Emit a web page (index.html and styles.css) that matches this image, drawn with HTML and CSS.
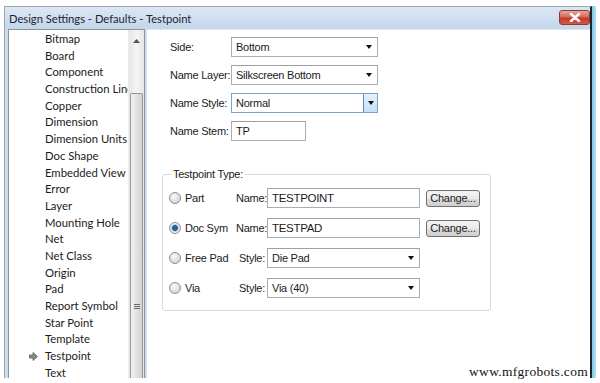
FILE: index.html
```html
<!DOCTYPE html>
<html>
<head>
<meta charset="utf-8">
<link rel="stylesheet" href="styles.css">
</head>
<body>
<div class="screen">
  <div class="frame">
    <div class="window">
      <div class="titlebar">
        <span class="title">Design Settings - Defaults - Testpoint</span>
        <div class="close">
          <svg width="12" height="9" viewBox="0 0 12 9"><path d="M2 1 L10 8 M10 1 L2 8" stroke="#fff" stroke-width="2.4" stroke-linecap="round"/></svg>
        </div>
      </div>
      <div class="body">
        <div class="listbox">
          <ul class="items">
            <li>Bitmap</li>
            <li>Board</li>
            <li>Component</li>
            <li>Construction Line</li>
            <li>Copper</li>
            <li>Dimension</li>
            <li>Dimension Units</li>
            <li>Doc Shape</li>
            <li>Embedded View</li>
            <li>Error</li>
            <li>Layer</li>
            <li>Mounting Hole</li>
            <li>Net</li>
            <li>Net Class</li>
            <li>Origin</li>
            <li>Pad</li>
            <li>Report Symbol</li>
            <li>Star Point</li>
            <li>Template</li>
            <li class="current"><svg class="marker" width="9" height="9" viewBox="0 0 9 9"><path d="M0.5 3 H4 V0.5 L8.5 4.5 L4 8.5 V6 H0.5 Z" fill="#8a8a8a" stroke="#5a5a5a" stroke-width="0.8"/></svg>Testpoint</li>
            <li>Text</li>
          </ul>
          <div class="scrollbar">
            <div class="arrow-up"><svg width="7" height="4" viewBox="0 0 7 4"><path d="M0 4 L3.5 0 L7 4 Z" fill="#555"/></svg></div>
            <div class="track"></div>
            <div class="thumb"><div class="grip"><span></span><span></span><span></span></div></div>
          </div>
        </div>
        <div class="panel">
          <div class="form">
            <div class="row"><span class="lbl">Side:</span><div class="combo w147"><span>Bottom</span><i class="tri"></i></div></div>
            <div class="row"><span class="lbl">Name Layer:</span><div class="combo w147"><span>Silkscreen Bottom</span><i class="tri"></i></div></div>
            <div class="row"><span class="lbl">Name Style:</span><div class="combo w147 focus"><span>Normal</span><div class="dropbtn"><i class="tri"></i></div></div></div>
            <div class="row"><span class="lbl">Name Stem:</span><div class="text w75"><span>TP</span></div></div>
          </div>
          <fieldset class="group">
            <legend>Testpoint Type:</legend>
            <div class="grow"><i class="radio"></i><span class="rl">Part</span><span class="gl">Name:</span><div class="text w153"><span class="big">TESTPOINT</span></div><div class="btn">Change...</div></div>
            <div class="grow"><i class="radio on"></i><span class="rl">Doc Sym</span><span class="gl">Name:</span><div class="text w153"><span class="big">TESTPAD</span></div><div class="btn">Change...</div></div>
            <div class="grow"><i class="radio"></i><span class="rl">Free Pad</span><span class="gl">Style:</span><div class="combo w153"><span>Die Pad</span><i class="tri"></i></div></div>
            <div class="grow"><i class="radio"></i><span class="rl">Via</span><span class="gl">Style:</span><div class="combo w153"><span>Via (40)</span><i class="tri"></i></div></div>
          </fieldset>
        </div>
      </div>
    </div>
    <div class="edge"></div>
  </div>
  <div class="watermark">www.mfgrobots.com</div>
</div>
</body>
</html>
```
FILE: styles.css
```css
html, body { margin: 0; padding: 0; background: #fff; }
.screen { position: relative; width: 600px; height: 383px; overflow: hidden; }
.frame { display: flex; margin: 6px 0 0 4px; height: 372px; }
.window {
  width: 588px; height: 372px;
  border: 1px solid #9aa6b4; border-right: 2px solid #1c2630; border-bottom: none;
  background: #cfdcec; display: flex; flex-direction: column; box-sizing: border-box;
}
.edge { width: 4px; background: linear-gradient(to right, #7fc6e8, #b8e2f4); }
.titlebar {
  height: 22px; flex: none; display: flex; align-items: center; justify-content: space-between;
  background: linear-gradient(#dce7f4, #c4d6ec);
  padding: 0 0 0 4px;
}
.title { font-family: Lato, "Noto Sans", sans-serif; font-size: 11.2px; color: #1e2430; }
.close {
  width: 31px; height: 15px; border-radius: 3px; border: 1px solid #8c3b33;
  background: linear-gradient(#e8a79d 0%, #d66c5c 45%, #c0392a 55%, #d25a45 100%);
  display: flex; align-items: center; justify-content: center; box-sizing: border-box;
  margin-top: -2px;
}
.body { flex: 1; display: flex; padding: 0 0 0 3px; min-height: 0; }
.listbox {
  width: 137px; flex: none; background: #fff; border: 1px solid #8c939c; border-bottom: none;
  display: flex; box-sizing: border-box;
}
.items {
  list-style: none; margin: 0; padding: 1px 0 0 0; flex: 1; overflow: hidden;
  font-family: Lato, "Noto Sans", sans-serif; font-size: 11.3px; color: #1b1b1b;
}
.items li { height: 16.7px; line-height: 16.7px; padding-left: 36px; white-space: nowrap; position: relative; }
.marker { position: absolute; left: 20px; top: 4px; }
.scrollbar {
  width: 15px; flex: none; display: flex; flex-direction: column;
  background: linear-gradient(to right, #e6e6e6, #f4f4f4 50%, #e6e6e6);
  border-left: 1px solid #ececec;
}
.arrow-up { height: 21px; display: flex; align-items: center; justify-content: center; }
.track { height: 42px; }
.thumb {
  flex: 1; margin: 0 1px; border: 1px solid #979797; border-bottom: none; border-radius: 2px 2px 0 0;
  background: linear-gradient(to right, #f2f2f2, #e2e2e2 50%, #d2d2d2);
  position: relative;
}
.grip { position: absolute; left: 3px; top: 210px; display: flex; flex-direction: column; gap: 1px; }
.grip span { display: block; width: 6px; height: 1px; background: #6a6a6a; }
.panel {
  flex: 1; background: #fff; margin-left: 2px; border-top: 1px solid #dfe5ec;
  font-family: "Liberation Sans", Arial, sans-serif; font-size: 11px; letter-spacing: -0.25px; color: #1c1c1c;
  padding: 7px 0 0 15px;
}
.form { display: flex; flex-direction: column; gap: 8px; padding-left: 8px; }
.row { display: flex; align-items: center; height: 20px; white-space: nowrap; }
.lbl { width: 61px; flex: none; }
.combo, .text {
  height: 20px; box-sizing: border-box; border: 1px solid #abadb3; border-top-color: #9aa0a8;
  background: #fff; display: flex; align-items: center; justify-content: space-between; padding-left: 4px;
  flex: none;
}
.combo .tri { margin-right: 5px; }
.tri { display: block; width: 0; height: 0; border-left: 3.5px solid transparent; border-right: 3.5px solid transparent; border-top: 4px solid #111; }
.w147 { width: 147px; }
.w75 { width: 75px; }
.w153 { width: 153px; }
.focus { border-color: #7da2ce; }
.dropbtn {
  width: 14px; height: 18px; box-sizing: border-box; border-left: 1px solid #5f8ec2;
  background: linear-gradient(#e5f1fb, #c4e0f6); display: flex; align-items: center; justify-content: center;
}
.dropbtn .tri { margin: 0; }
.group {
  margin: 27px 0 0 0; width: 329px; box-sizing: border-box; border: 1px solid #d5dadf; border-radius: 3px;
  padding: 8px 0 12px 6px; display: flex; flex-direction: column; gap: 10px;
}
.group legend { padding: 0 2px; margin-left: 2px; font-size: 11px; }
.grow { display: flex; align-items: center; height: 20px; white-space: nowrap; }
.radio {
  width: 12px; height: 12px; border-radius: 50%; box-sizing: border-box; border: 1px solid #8e8f8f;
  background: radial-gradient(circle at 40% 35%, #fafafa, #d8d8d8 70%, #c4c4c4);
  flex: none;
}
.radio.on { background: radial-gradient(circle, #2c6aa8 0, #1d5a96 2.5px, #a9c6e0 3.2px, #f4f4f4 4.5px, #dcdcdc 6px); }
.rl { width: 51px; margin-left: 4px; flex: none; }
.gl { width: 29px; text-align: right; margin-right: 2px; flex: none; }
.big { font-size: 11.5px; letter-spacing: -0.3px; }
.btn {
  margin-left: 6px; width: 54px; height: 17px; box-sizing: border-box; border: 1px solid #707070; border-radius: 3px;
  background: linear-gradient(#f3f3f3, #ebebeb 50%, #dddddd 51%, #cfcfcf);
  display: flex; align-items: center; justify-content: center; font-size: 11px; flex: none;
}
.watermark {
  position: absolute; right: 10px; bottom: 3px; font-family: "Liberation Serif", serif; font-size: 13.5px;
  color: #111; background: #fff; padding: 0 2px; letter-spacing: 0.3px;
}
```
